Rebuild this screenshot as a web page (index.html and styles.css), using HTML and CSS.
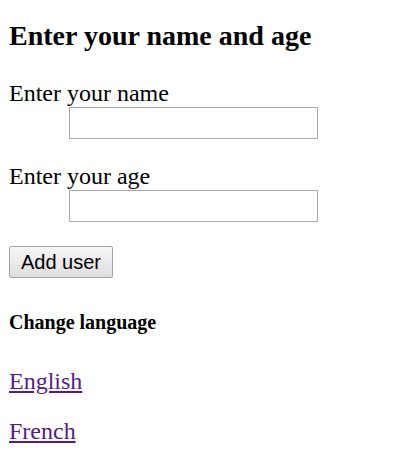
FILE: index.html
```html
<!DOCTYPE html>
<html>
<head>
<meta charset="utf-8">
<link rel="stylesheet" href="styles.css">
</head>
<body>
<div class="page">
  <h3 class="title">Enter your name and age</h3>
  <form class="form">
    <label class="label" for="name">Enter your name</label>
    <input class="field" id="name" type="text">
    <label class="label label-second" for="age">Enter your age</label>
    <input class="field" id="age" type="text">
    <button class="btn" type="button">Add user</button>
  </form>
  <h5 class="subtitle">Change language</h5>
  <a class="lang lang-first" href="#">English</a>
  <a class="lang lang-second" href="#">French</a>
</div>
</body>
</html>
```
FILE: styles.css
```css
html, body {
  margin: 0;
  padding: 0;
  background: #ffffff;
}
.page {
  display: flex;
  flex-direction: column;
  align-items: flex-start;
  padding: 0 9px;
  font-family: "Liberation Serif", "Times New Roman", serif;
  color: #000000;
}
.title {
  margin: 20px 0 0 0;
  font-size: 28px;
  line-height: 32px;
  font-weight: bold;
}
.form {
  display: flex;
  flex-direction: column;
  align-items: flex-start;
  margin: 27px 0 0 0;
}
.label {
  font-size: 24px;
  line-height: 28px;
}
.label-second {
  margin-top: 23px;
}
.field {
  box-sizing: border-box;
  width: 249px;
  height: 32px;
  margin: 0 0 0 60px;
  border: 1px solid #a9a9a9;
  padding: 0 4px;
  background: #ffffff;
  outline: none;
}
.btn {
  box-sizing: border-box;
  margin-top: 24px;
  width: 104px;
  height: 32px;
  padding: 0;
  font-family: "Liberation Sans", Arial, sans-serif;
  font-size: 20px;
  color: #000000;
  border: 1px solid #a3a3a3;
  border-radius: 2px;
  background: linear-gradient(#f6f6f6, #dedede);
}
.subtitle {
  margin: 33px 0 0 0;
  font-size: 20px;
  line-height: 23px;
  font-weight: bold;
}
.lang {
  font-size: 24px;
  line-height: 28px;
  color: #551a8b;
  text-decoration: underline;
}
.lang-first {
  margin-top: 33px;
}
.lang-second {
  margin-top: 22px;
}
```
